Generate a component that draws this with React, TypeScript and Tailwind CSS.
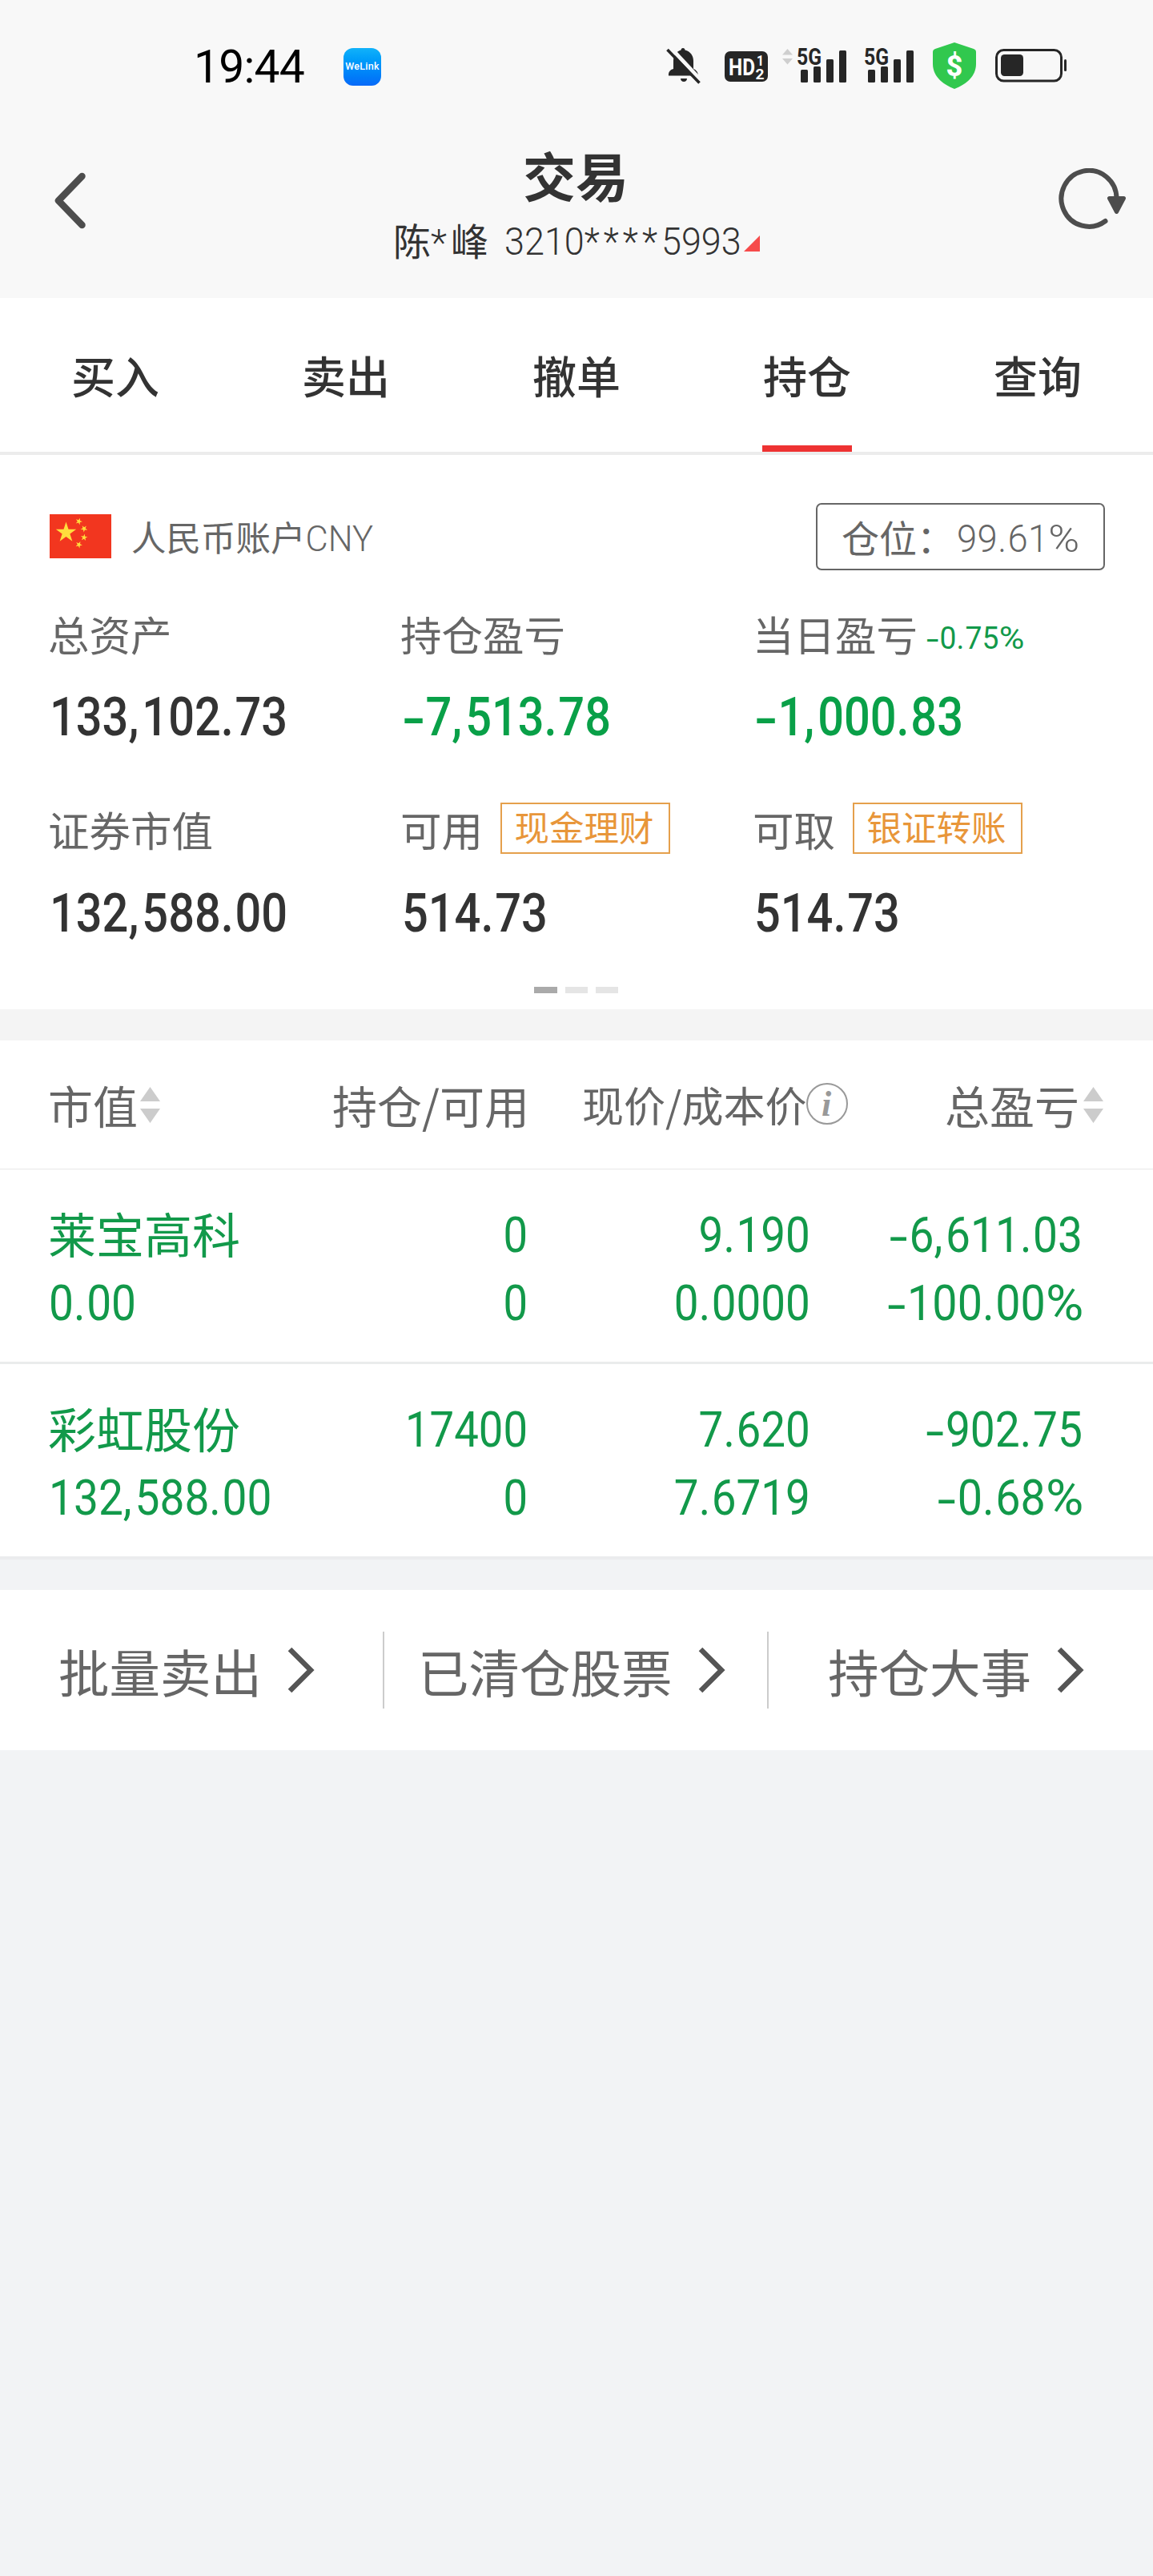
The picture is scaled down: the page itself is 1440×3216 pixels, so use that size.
import { Fragment } from 'react';
import clsx from 'clsx';

interface Holding {
  name: string;
  marketValue: string;
  position: string;
  available: string;
  price: string;
  cost: string;
  profit: string;
  profitRate: string;
}

const TABS = ['买入', '卖出', '撤单', '持仓', '查询'];
const ACTIVE_TAB = '持仓';

const HOLDINGS: Holding[] = [
  {
    name: '莱宝高科',
    marketValue: '0.00',
    position: '0',
    available: '0',
    price: '9.190',
    cost: '0.0000',
    profit: '-6,611.03',
    profitRate: '-100.00%',
  },
  {
    name: '彩虹股份',
    marketValue: '132,588.00',
    position: '17400',
    available: '0',
    price: '7.620',
    cost: '7.6719',
    profit: '-902.75',
    profitRate: '-0.68%',
  },
];

const ACTIONS = [
  { label: '批量卖出', className: 'pl-[73px]' },
  { label: '已清仓股票', className: 'pl-[42px]' },
  { label: '持仓大事', className: 'pl-[74px]' },
];

// Condensed figures with a wider minus and percent sign.
function Num({ value, className }: { value: string; className?: string }) {
  return (
    <span className={clsx("inline-block whitespace-pre font-['Roboto',sans-serif] leading-none", className)}>
      {value.split(/([-,.*%])/).map((part, i) => {
        if (part === '-') return <span key={i} className="mr-[0.17em] inline-block origin-left translate-y-[0.03em] scale-x-[1.5]">-</span>;
        if (part === '%') return <span key={i} className="mr-[0.1em] inline-block origin-left scale-x-[1.16]">%</span>;
        if (part === ',') return <span key={i} className="tracking-[0.07em]">,</span>;
        if (part === '.') return <span key={i} className="tracking-[0.03em]">.</span>;
        if (part === '*') return <span key={i} className="tracking-[0.11em]">*</span>;
        return <Fragment key={i}>{part}</Fragment>;
      })}
    </span>
  );
}

function BellOffIcon() {
  return (
    <svg width="44" height="46" viewBox="0 0 44 46">
      <path
        d="M21 1c1.500 0 2.500 1 2.500 2.400C30 5 34 10 34 17v10c3 1 6 4 6 8.500H3C2.500 31 5 28 9 27V17c0-7 4-12 9.500-13.600C18.500 2 19.500 1 21 1z"
        fill="#262626"
      />
      <path d="M18 39h8c0 2.500-1.800 4-4 4s-4-1.500-4-4z" fill="#262626" />
      <path d="M5 0l40 43" stroke="#f8f8f8" strokeWidth="5" />
      <path d="M1.500 3l40 41.500" stroke="#262626" strokeWidth="3.600" />
    </svg>
  );
}

function HdIcon() {
  return (
    <svg className="overflow-visible" width="54" height="38" viewBox="0 0 54 38">
      <rect width="54" height="38" rx="7" fill="#262626" />
      <text x="5" y="29.500" fontFamily="Roboto, sans-serif" fontWeight="700" fontSize="29" fill="#fff" textLength="33" lengthAdjust="spacingAndGlyphs">HD</text>
      <text x="40" y="18" fontFamily="Roboto, sans-serif" fontWeight="700" fontSize="18" fill="#fff" textLength="9" lengthAdjust="spacingAndGlyphs">1</text>
      <text x="38.500" y="34.500" fontFamily="Roboto, sans-serif" fontWeight="700" fontSize="18" fill="#fff" textLength="11" lengthAdjust="spacingAndGlyphs">2</text>
    </svg>
  );
}

function SignalIcon({ arrows = false }: { arrows?: boolean }) {
  return (
    <svg className="overflow-visible" width="80" height="46" viewBox="0 0 80 46">
      {arrows && <path d="M0 9.500L6.500 2 13 9.500zM0 14h13l-6.500 7.500z" fill="#cfcfcf" />}
      <text x="18" y="22" fontFamily="Roboto, sans-serif" fontWeight="700" fontSize="30" fill="#262626" textLength="31" lengthAdjust="spacingAndGlyphs">5G</text>
      <g fill="#262626">
        <rect x="23" y="28" width="9" height="16" rx="1.500" />
        <rect x="39" y="24" width="9" height="20" rx="1.500" />
        <rect x="55" y="15" width="9" height="29" rx="1.500" />
        <rect x="71" y="4" width="9" height="40" rx="1.500" />
      </g>
    </svg>
  );
}

function ShieldIcon() {
  return (
    <svg width="54" height="58" viewBox="0 0 54 58">
      <path d="M27 0l24 8c2 .7 3 2 3 4v15c0 14-11 25-27 31C11 52 0 41 0 27V12c0-2 1-3.300 3-4z" fill="#31c84e" />
      <text x="27" y="41.500" textAnchor="middle" fontFamily="Roboto, sans-serif" fontWeight="800" fontSize="36" fill="#fff">$</text>
    </svg>
  );
}

function BatteryIcon() {
  return (
    <svg width="90" height="42" viewBox="0 0 90 42">
      <rect x="1.500" y="1.500" width="81" height="38.500" rx="9" fill="none" stroke="#262626" strokeWidth="3" />
      <rect x="7" y="7" width="28" height="27" rx="4.500" fill="#262626" />
      <rect x="86" y="13" width="3" height="15" rx="1.500" fill="#262626" />
    </svg>
  );
}

function StatusBar() {
  return (
    <div className="flex h-[166px] items-center pb-[2px]">
      <span className="ml-[242px] w-[187px] pt-[3px] font-['Roboto',sans-serif] text-[57px] leading-none tracking-[-0.8px] text-black">19:44</span>
      <div className="mt-[2px] flex size-[47px] items-center justify-center rounded-[12px] bg-linear-to-b from-[#12b2f9] to-[#0a69f8] font-['Roboto',sans-serif] text-[12.5px] leading-none font-medium tracking-[0.3px] text-white">
        WeLink
      </div>
      <div className="ml-[356px] flex items-center">
        <BellOffIcon />
        <div className="mt-[2px] ml-[29px]"><HdIcon /></div>
        <div className="ml-[18px]"><SignalIcon arrows /></div>
        <div className="ml-[4px]"><SignalIcon /></div>
        <div className="ml-[24px]"><ShieldIcon /></div>
        <div className="ml-[24px]"><BatteryIcon /></div>
      </div>
    </div>
  );
}

function NavBar() {
  return (
    <div className="flex h-[206px] justify-between text-[#333]">
      <svg className="mt-[49px] ml-[68px]" width="40" height="71" viewBox="0 0 40 71">
        <path d="M34.500 5L5 35.500l29.500 30.500" fill="none" stroke="#4d4d4d" strokeWidth="8.500" strokeLinecap="round" strokeLinejoin="round" />
      </svg>
      <div className="ml-[8px] w-[460px]">
        <h1 className="mt-[18px] text-center text-[66px] leading-none font-bold">交易</h1>
        <div className="mt-[24px] ml-[2px] flex h-[52px] items-center text-[47px] leading-none">
          <span className="w-[139px] shrink-0 whitespace-nowrap">
            陈<span className="inline-block w-[25px] font-['Roboto',sans-serif] font-light">*</span>峰
          </span>
          <Num value="3210****5993" className="mt-[3px] mr-[-20px] origin-left scale-x-[0.937] text-[48px] font-[350]" />
          <svg className="mt-[7px] ml-[3px]" width="20" height="20" viewBox="0 0 20 20">
            <path d="M20 0v20H0z" fill="#f64b4b" />
          </svg>
        </div>
      </div>
      <svg className="mt-[44px] mr-[32px]" width="86" height="78" viewBox="0 0 86 78">
        <path d="M72.500 38A34.500 35 0 1 0 58.500 66" fill="none" stroke="#4d4d4d" strokeWidth="6" strokeLinecap="round" />
        <path d="M63.500 37.500h18l-9 17z" fill="#4d4d4d" stroke="#4d4d4d" strokeWidth="5" strokeLinejoin="round" />
      </svg>
    </div>
  );
}

function Tabs() {
  return (
    <nav className="grid h-[196px] grid-cols-5 border-b-4 border-[#ececec] bg-white">
      {TABS.map((tab) => (
        <div key={tab} className="flex flex-col items-center justify-between">
          <span className="mt-[68px] text-[55px] leading-none font-medium text-[#333]">{tab}</span>
          {tab === ACTIVE_TAB && <div className="h-[8px] w-[112px] bg-[#ee3232]" />}
        </div>
      ))}
    </nav>
  );
}

const STAR = 'M0-10L2.245-3.090 9.511-3.090 3.633 1.180 5.878 8.090 0 3.820-5.878 8.090-3.633 1.180-9.511-3.090-2.245-3.090z';

function Flag() {
  return (
    <svg className="mb-[1px]" width="77" height="55" viewBox="0 0 77 55">
      <rect width="77" height="55" fill="#f2361f" />
      <g fill="#ffde3d">
        <path d={STAR} transform="translate(20.500 23) scale(1.340)" />
        <path d={STAR} transform="translate(36.500 9) rotate(20) scale(.45)" />
        <path d={STAR} transform="translate(43 18) rotate(40) scale(.45)" />
        <path d={STAR} transform="translate(43 29) rotate(8) scale(.45)" />
        <path d={STAR} transform="translate(36.500 38) rotate(25) scale(.45)" />
      </g>
    </svg>
  );
}

function Stat({ label, value, tag, rate, green }: { label: string; value: string; tag?: string; rate?: string; green?: boolean }) {
  return (
    <div className="w-[440px]">
      <div className="-ml-[2px] flex h-[64px] items-center whitespace-nowrap text-[#666]">
        <span className="pt-[3px] text-[51.500px] leading-none">{label}</span>
        {rate && <Num value={rate} className="mt-[17px] ml-[11px] origin-left scale-x-[0.955] text-[39px] text-[#12994a]" />}
        {tag && (
          <span className="ml-[22px] flex h-[64px] w-[212px] items-center justify-center border-2 border-[#e5a04c] pr-[3px] pb-[3px] text-[43.500px] leading-none text-[#e8963a]">
            {tag}
          </span>
        )}
      </div>
      <Num
        value={value}
        className={clsx('mt-[40px] origin-left scale-x-[0.855] text-[67.500px] font-medium', green ? 'text-[#09a048]' : 'text-[#333]')}
      />
    </div>
  );
}

function AccountSummary() {
  return (
    <section className="h-[692px] bg-white pt-[60px] pl-[62px]">
      <div className="flex h-[84px] items-center text-[#666]">
        <Flag />
        <span className="ml-[25px] pt-[3px] text-[43.500px] leading-none">
          人民币账户<span className="font-['Roboto',sans-serif] font-[350]">CNY</span>
        </span>
        <div className="mr-[60px] ml-auto flex h-[84px] w-[361px] items-center rounded-[7px] border-2 border-[#666] pl-[30px]">
          <span className="w-[144px] pb-[2px] text-[47px] leading-none whitespace-nowrap">仓位：</span>
          <Num value="99.61%" className="mt-[6px] origin-left scale-x-[0.945] text-[48px] font-[350] tracking-[0.01em]" />
        </div>
      </div>
      <div className="mt-[45px] flex">
        <Stat label="总资产" value="133,102.73" />
        <Stat label="持仓盈亏" value="-7,513.78" green />
        <Stat label="当日盈亏" value="-1,000.83" rate="-0.75%" green />
      </div>
      <div className="mt-[73px] flex">
        <Stat label="证券市值" value="132,588.00" />
        <Stat label="可用" value="514.73" tag="现金理财" />
        <Stat label="可取" value="514.73" tag="银证转账" />
      </div>
      <div className="mt-[59px] ml-[605px] flex gap-[10px]">
        <i className="h-[8px] w-[29px] bg-[#aaa]" />
        <i className="h-[8px] w-[28px] bg-[#e5e5e5]" />
        <i className="h-[8px] w-[28px] bg-[#e5e5e5]" />
      </div>
    </section>
  );
}

function SortIcon() {
  return (
    <svg width="25" height="45" viewBox="0 0 25 45">
      <path d="M0 18L12.500 0 25 18zM0 27h25L12.500 45z" fill="#ccc" />
    </svg>
  );
}

function HoldingsTable() {
  return (
    <section className="bg-white">
      <div className="flex h-[161px] items-center border-b border-[#e8e8e8] pl-[60px] text-[56px] leading-none whitespace-nowrap text-[#666]">
        <div className="flex w-[355px] items-center gap-[3px]">
          市值<SortIcon />
        </div>
        <div className="w-[312px]">持仓/可用</div>
        <div className="flex w-[453px] items-center text-[52px]">
          现价/成本价
          <svg className="mb-[2px] -ml-[1px]" width="54" height="54" viewBox="0 0 54 54">
            <circle cx="27" cy="27" r="25" fill="none" stroke="#999" strokeWidth="2" />
            <text x="26" y="42" textAnchor="middle" fontFamily="Liberation Serif, serif" fontStyle="italic" fontWeight="700" fontSize="44" fill="#999">i</text>
          </svg>
        </div>
        <div className="flex items-center gap-[5px]">
          总盈亏<SortIcon />
        </div>
      </div>
      {HOLDINGS.map((row, i) => (
        <div
          key={row.name}
          className={clsx(
            'grid grid-cols-[250px_348px_353px_340px] grid-rows-[85px_85px] items-center justify-items-end pt-[41px] pl-[61px] text-[60.500px] text-[#12994a]',
            i === 0 ? 'h-[243px] border-b-3 border-[#eaecec]' : 'h-[244px] border-b-4 border-[#ebecee]'
          )}
        >
          <span className="-ml-[1px] justify-self-start pb-[9px] text-[60px] leading-none whitespace-nowrap">{row.name}</span>
          <Num value={row.position} className="origin-right scale-x-[0.9]" />
          <Num value={row.price} className="origin-right scale-x-[0.905]" />
          <Num value={row.profit} className="origin-right scale-x-[0.91]" />
          <Num value={row.marketValue} className="origin-left scale-x-[0.91] justify-self-start" />
          <Num value={row.available} className="origin-right scale-x-[0.9]" />
          <Num value={row.cost} className="origin-right scale-x-[0.905]" />
          <Num value={row.profitRate} className="origin-right scale-x-[0.92]" />
        </div>
      ))}
    </section>
  );
}

function Actions() {
  return (
    <section className="mt-[38px] grid h-[200px] grid-cols-3 items-center bg-white">
      {ACTIONS.map(({ label, className }, i) => (
        <div key={label} className={clsx('flex h-[96px] items-center', i < 2 && 'border-r-2 border-[#ccc]', className)}>
          <span className="pt-[2px] text-[63.500px] leading-none whitespace-nowrap text-[#666]">{label}</span>
          <svg className="ml-[31px]" width="36" height="58" viewBox="0 0 36 58">
            <path d="M4 3l26 26L4 55" fill="none" stroke="#555" strokeWidth="6.500" />
          </svg>
        </div>
      ))}
    </section>
  );
}

export default function App() {
  return (
    <div className="min-h-[3216px] w-[1440px] bg-[#f2f3f5] font-['Noto_Sans_CJK_SC',sans-serif]">
      <header className="bg-[#f8f8f8]">
        <StatusBar />
        <NavBar />
      </header>
      <Tabs />
      <AccountSummary />
      <div className="h-[39px] bg-[#f4f4f4]" />
      <HoldingsTable />
      <Actions />
    </div>
  );
}
